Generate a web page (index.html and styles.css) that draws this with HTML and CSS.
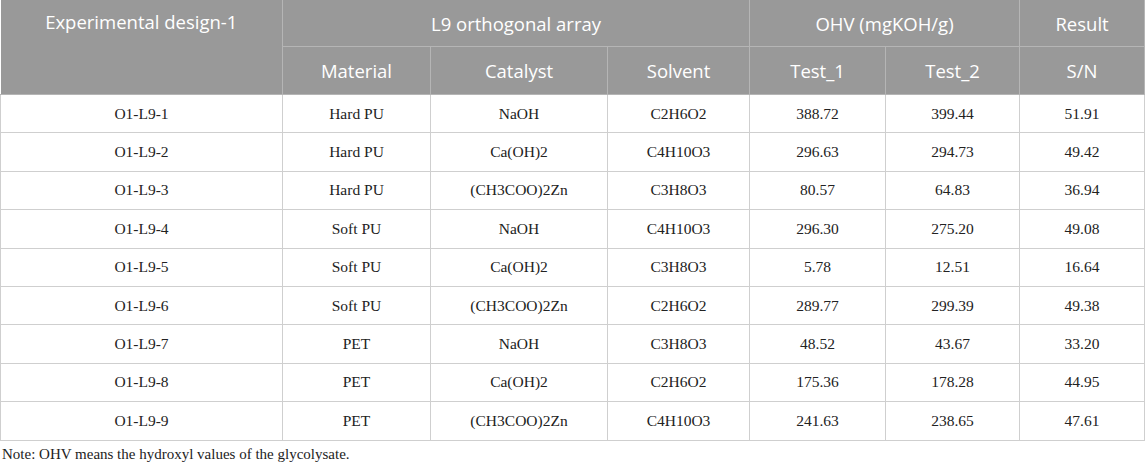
FILE: index.html
```html
<!DOCTYPE html>
<html>
<head>
<meta charset="utf-8">
<link rel="stylesheet" href="styles.css">
</head>
<body>
<table class="grid">
<colgroup>
<col class="c1"><col class="c2"><col class="c3"><col class="c4"><col class="c5"><col class="c6"><col class="c7">
</colgroup>
<thead>
<tr class="h1">
<th rowspan="2" class="top">Experimental design-1</th>
<th colspan="3">L9 orthogonal array</th>
<th colspan="2">OHV (mgKOH/g)</th>
<th>Result</th>
</tr>
<tr class="h2">
<th>Material</th><th>Catalyst</th><th>Solvent</th><th>Test_1</th><th>Test_2</th><th>S/N</th>
</tr>
</thead>
<tbody>
<tr><td>O1-L9-1</td><td>Hard PU</td><td>NaOH</td><td>C2H6O2</td><td>388.72</td><td>399.44</td><td>51.91</td></tr>
<tr><td>O1-L9-2</td><td>Hard PU</td><td>Ca(OH)2</td><td>C4H10O3</td><td>296.63</td><td>294.73</td><td>49.42</td></tr>
<tr><td>O1-L9-3</td><td>Hard PU</td><td>(CH3COO)2Zn</td><td>C3H8O3</td><td>80.57</td><td>64.83</td><td>36.94</td></tr>
<tr><td>O1-L9-4</td><td>Soft PU</td><td>NaOH</td><td>C4H10O3</td><td>296.30</td><td>275.20</td><td>49.08</td></tr>
<tr><td>O1-L9-5</td><td>Soft PU</td><td>Ca(OH)2</td><td>C3H8O3</td><td>5.78</td><td>12.51</td><td>16.64</td></tr>
<tr><td>O1-L9-6</td><td>Soft PU</td><td>(CH3COO)2Zn</td><td>C2H6O2</td><td>289.77</td><td>299.39</td><td>49.38</td></tr>
<tr><td>O1-L9-7</td><td>PET</td><td>NaOH</td><td>C3H8O3</td><td>48.52</td><td>43.67</td><td>33.20</td></tr>
<tr><td>O1-L9-8</td><td>PET</td><td>Ca(OH)2</td><td>C2H6O2</td><td>175.36</td><td>178.28</td><td>44.95</td></tr>
<tr><td>O1-L9-9</td><td>PET</td><td>(CH3COO)2Zn</td><td>C4H10O3</td><td>241.63</td><td>238.65</td><td>47.61</td></tr>
</tbody>
</table>
<p class="note">Note: OHV means the hydroxyl values of the glycolysate.</p>
</body>
</html>
```
FILE: styles.css
```css
html, body {
  margin: 0;
  padding: 0;
  background: #ffffff;
}
.grid {
  border-collapse: collapse;
  table-layout: fixed;
  width: 1144px;
}
.c1 { width: 282px; }
.c2 { width: 148px; }
.c3 { width: 177px; }
.c4 { width: 142px; }
.c5 { width: 136px; }
.c6 { width: 134px; }
.c7 { width: 125px; }
.grid th {
  background: #999999;
  color: #ffffff;
  font-family: "Open Sans", "Noto Sans", sans-serif;
  font-weight: 400;
  font-size: 18.5px;
  text-align: center;
  padding: 0;
  border: 1px solid #b5b5b5;
  border-top: none;
}
.grid .h1 th { height: 46px; }
.grid .h2 th { height: 47px; }
.grid th.top {
  vertical-align: top;
  padding-top: 9px;
  border-left: none;
}
.grid td {
  font-family: "Liberation Serif", "Times New Roman", serif;
  font-size: 15.5px;
  color: #222222;
  text-align: center;
  height: 37.4px;
  padding: 0;
  border: 1px solid #cfcfcf;
}
.note {
  margin: 5px 0 0 2px;
  font-family: "Liberation Serif", "Times New Roman", serif;
  font-size: 15px;
  color: #222222;
}
```
